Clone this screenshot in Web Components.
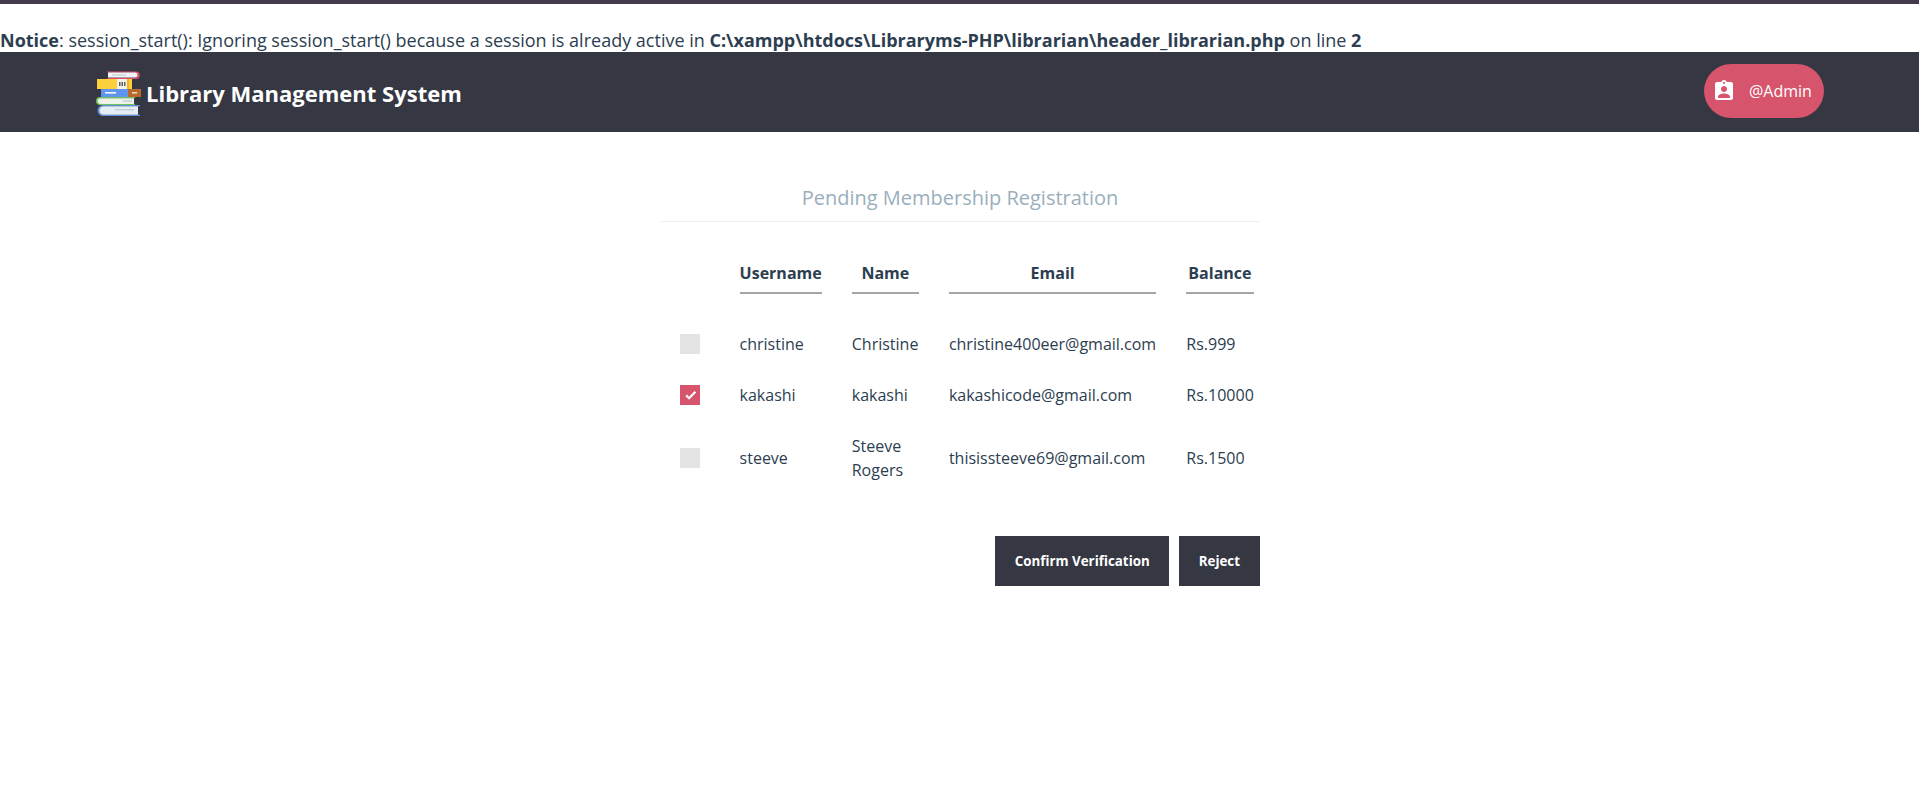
<!DOCTYPE html>
<html lang="en">
<head>
<meta charset="utf-8">
<title>Pending Membership Registration</title>
<style>
  html, body { margin: 0; padding: 0; background: #fff; }
  body { font-family: "Open Sans", sans-serif; font-size: 16px; line-height: 24px; color: #2c3e50; border-top: 4px solid #453a4d; }
</style>
</head>
<body>
<php-notice><b>Notice</b>: session_start(): Ignoring session_start() because a session is already active in <b>C:\xampp\htdocs\Libraryms-PHP\librarian\header_librarian.php</b> on line <b>2</b></php-notice>
<app-header>
  <span slot="brand">Library Management System</span>
  <user-pill slot="user">@Admin</user-pill>
</app-header>
<pending-panel>
  <span slot="title">Pending Membership Registration</span>
  <member-table></member-table>
  <action-button slot="actions">Confirm Verification</action-button>
  <action-button slot="actions">Reject</action-button>
</pending-panel>

<script>
class PhpNotice extends HTMLElement {
  constructor() {
    super();
    this.attachShadow({ mode: "open" });
  }
  connectedCallback() {
    this.shadowRoot.innerHTML = `
      <style>
        :host { display: block; padding-top: 24px; height: 24px; font-size: 18px; white-space: nowrap; overflow: hidden; }
      </style>
      <slot></slot>
    `;
  }
}

class AppHeader extends HTMLElement {
  constructor() {
    super();
    this.attachShadow({ mode: "open" });
  }
  connectedCallback() {
    this.shadowRoot.innerHTML = `
      <style>
        :host { display: block; background: #353743; color: #fff; }
        nav { display: flex; justify-content: space-between; align-items: center; height: 80px; padding: 0 95px 0 96px; }
        .brand { display: flex; align-items: center; gap: 5px; font-size: 22px; font-weight: 700; margin-top: 3px; line-height: 22px; }
        svg { display: block; width: 45px; height: 45px; }
        ::slotted(span) { display: block; padding-bottom: 2px; }
        ::slotted(user-pill) { margin-bottom: 2px; }
      </style>
      <nav>
        <div class="brand">
          <svg viewBox="0 0 45 45" aria-hidden="true">
            <path d="M11 .5h29a3.5 3.5 0 0 1 0 7.5H11l1-1.2h27a2.4 2.4 0 0 0 0-5H12z" fill="#e0506c"/>
            <path d="M12 1.6h27a2.4 2.4 0 0 1 0 5H12z" fill="#f2f4f7"/>
            <rect x="16" y="3.3" width="14" height="1.4" fill="#c5d3dd"/>
            <rect x="1" y="8" width="35" height="10" fill="#fcd03c"/>
            <rect x="21" y="8" width="10" height="10" fill="#f4f1e6"/>
            <rect x="31" y="8" width="2" height="10" fill="#f6b21a"/>
            <rect x="23" y="11" width="1.5" height="4" fill="#57606c"/>
            <rect x="25.5" y="11" width="1.5" height="4" fill="#57606c"/>
            <rect x="28" y="11" width="1.5" height="4" fill="#57606c"/>
            <rect x="5" y="18" width="28" height="8" fill="#5f95ee"/>
            <rect x="9" y="21" width="11" height="1.6" fill="#f4f7fb"/>
            <rect x="32" y="18" width="13" height="8" fill="#b8692e"/>
            <rect x="36" y="21" width="5" height="1.6" fill="#efd9c4"/>
            <path d="M4 26h35v1.3H4.5a2.9 2.9 0 0 0 0 5.6H39v1.1H4a4 4 0 0 1 0-8z" fill="#6fc35a"/>
            <path d="M4.5 27.3H38v5.6H4.5a2.8 2.8 0 0 1 0-5.6z" fill="#eef3e8"/>
            <rect x="27" y="29.3" width="9" height="1.5" fill="#c3d0d8"/>
            <path d="M7 34h37v1.2H7.5a4.3 4.3 0 0 0 0 8.6H44V45H7a5.5 5.5 0 0 1 0-11z" fill="#5c8fe0"/>
            <path d="M7.5 35.2H42v8.6H7.5a4.3 4.3 0 0 1 0-8.6z" fill="#e6eef5"/>
            <rect x="19" y="38" width="19" height="1.5" fill="#c3d0dc"/>
          </svg>
          <slot name="brand"></slot>
        </div>
        <slot name="user"></slot>
      </nav>
    `;
  }
}

class UserPill extends HTMLElement {
  constructor() {
    super();
    this.attachShadow({ mode: "open" });
  }
  connectedCallback() {
    this.shadowRoot.innerHTML = `
      <style>
        :host { display: flex; align-items: center; box-sizing: border-box; width: 120px; height: 54px; padding-left: 8px; border-radius: 27px; background: #d6546c; color: #fff; font-size: 16px; }
        svg { display: block; width: 24px; height: 24px; margin-right: 13px; fill: #fff; }
      </style>
      <svg viewBox="0 0 24 24" aria-hidden="true">
        <path d="M19 3h-4.18C14.4 1.84 13.3 1 12 1c-1.3 0-2.4.84-2.82 2H5c-1.1 0-2 .9-2 2v14c0 1.1.9 2 2 2h14c1.1 0 2-.9 2-2V5c0-1.1-.9-2-2-2zm-7 0c.55 0 1 .45 1 1s-.45 1-1 1-1-.45-1-1 .45-1 1-1zm0 4c1.66 0 3 1.34 3 3s-1.34 3-3 3-3-1.34-3-3 1.34-3 3-3zm6 12H6v-1.4c0-2 4-3.1 6-3.1s6 1.1 6 3.1V19z"/>
      </svg>
      <slot></slot>
    `;
  }
}

class PendingPanel extends HTMLElement {
  constructor() {
    super();
    this.attachShadow({ mode: "open" });
  }
  connectedCallback() {
    this.shadowRoot.innerHTML = `
      <style>
        :host { display: block; box-sizing: border-box; width: 600px; margin: 0 auto; padding-top: 51px; }
        h2 { margin: 0 0 39px 1px; height: 38px; border-bottom: 1px solid #eee; box-sizing: content-box; font-size: 20px; line-height: 30px; font-weight: 400; text-align: center; color: #9aafbc; }
        .actions { display: flex; justify-content: flex-end; gap: 10px; margin-top: 41px; }
      </style>
      <h2><slot name="title"></slot></h2>
      <slot></slot>
      <div class="actions"><slot name="actions"></slot></div>
    `;
  }
}

class CheckMark extends HTMLElement {
  constructor() {
    super();
    this.attachShadow({ mode: "open" });
  }
  connectedCallback() {
    const on = this.hasAttribute("checked");
    this.shadowRoot.innerHTML = `
      <style>
        :host { display: block; width: 20px; height: 20px; background: ${on ? "#d6546c" : "#e4e4e4"}; }
        svg { display: block; width: 20px; height: 20px; }
      </style>
      ${on ? `<svg viewBox="0 0 20 20" aria-hidden="true"><path d="M6.2 10.4l2.9 2.8L15.4 6.8" fill="none" stroke="#fff" stroke-width="2.2"/></svg>` : ""}
    `;
  }
}

class MemberTable extends HTMLElement {
  constructor() {
    super();
    this.attachShadow({ mode: "open" });
  }
  connectedCallback() {
    const members = [
      ["christine", "Christine", "christine400eer@gmail.com", "Rs.999", false],
      ["kakashi", "kakashi", "kakashicode@gmail.com", "Rs.10000", true],
      ["steeve", "Steeve Rogers", "thisissteeve69@gmail.com", "Rs.1500", false],
    ];
    const rows = members.map((m) => `
      <tr>
        <td class="box"><check-mark ${m[4] ? "checked" : ""}></check-mark></td>
        <td>${m[0]}</td>
        <td>${m[1]}</td>
        <td>${m[2]}</td>
        <td>${m[3]}</td>
      </tr>
    `).join("");

    this.shadowRoot.innerHTML = `
      <style>
        :host { display: block; margin-left: -10px; }
        table { table-layout: fixed; width: 634px; border-collapse: separate; border-spacing: 30px 0; }
        th { padding: 0 0 7px; border-bottom: 2px solid #a5a5a5; font-weight: 700; text-align: center; }
        th.blank { border: 0; }
        td { padding: 13.5px 0; vertical-align: middle; }
        tbody::before { content: ""; display: table-row; height: 24px; }
      </style>
      <table>
        <colgroup>
          <col style="width:30px"><col style="width:82px"><col style="width:67px"><col style="width:207px"><col style="width:67px">
        </colgroup>
        <thead>
          <tr><th class="blank"></th><th>Username</th><th>Name</th><th>Email</th><th>Balance</th></tr>
        </thead>
        <tbody>${rows}</tbody>
      </table>
    `;
  }
}

class ActionButton extends HTMLElement {
  constructor() {
    super();
    this.attachShadow({ mode: "open" });
  }
  connectedCallback() {
    this.shadowRoot.innerHTML = `
      <style>
        :host { display: flex; align-items: center; height: 50px; padding: 0 19.5px; background: #353743; color: #fff; font-size: 13.333px; font-weight: 700; cursor: pointer; }
      </style>
      <slot></slot>
    `;
  }
}

customElements.define("php-notice", PhpNotice);
customElements.define("app-header", AppHeader);
customElements.define("user-pill", UserPill);
customElements.define("pending-panel", PendingPanel);
customElements.define("check-mark", CheckMark);
customElements.define("member-table", MemberTable);
customElements.define("action-button", ActionButton);
</script>
</body>
</html>
